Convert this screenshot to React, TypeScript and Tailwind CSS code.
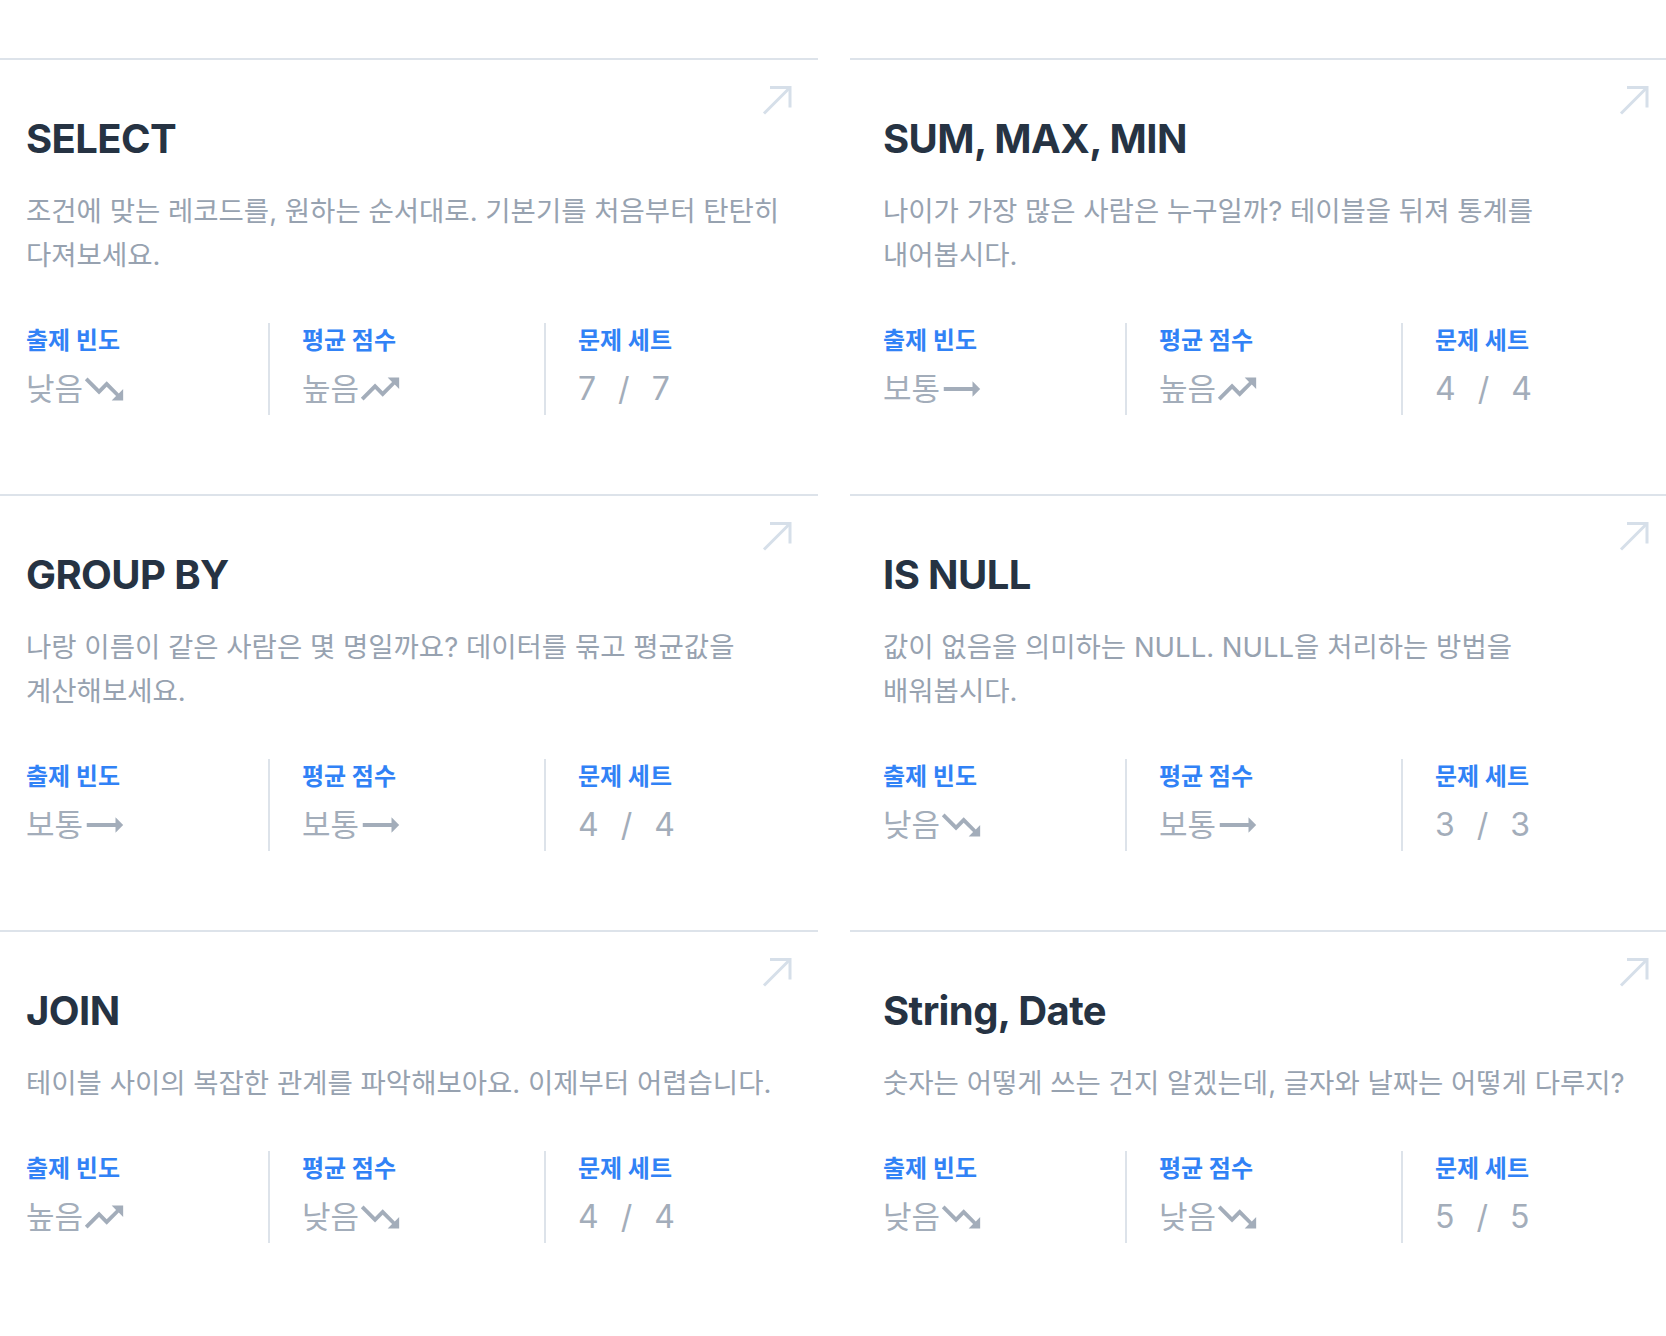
import React from "react";

type Trend = "up" | "down" | "flat";

interface Topic {
	title: string;
	description: string;
	frequency: { label: string; trend: Trend };
	score: { label: string; trend: Trend };
	solved: number;
	total: number;
}

const TOPICS: Topic[] = [
	{
		title: "SELECT",
		description: "조건에 맞는 레코드를, 원하는 순서대로. 기본기를 처음부터 탄탄히 다져보세요.",
		frequency: { label: "낮음", trend: "down" },
		score: { label: "높음", trend: "up" },
		solved: 7,
		total: 7,
	},
	{
		title: "SUM, MAX, MIN",
		description: "나이가 가장 많은 사람은 누구일까? 테이블을 뒤져 통계를 내어봅시다.",
		frequency: { label: "보통", trend: "flat" },
		score: { label: "높음", trend: "up" },
		solved: 4,
		total: 4,
	},
	{
		title: "GROUP BY",
		description: "나랑 이름이 같은 사람은 몇 명일까요? 데이터를 묶고 평균값을 계산해보세요.",
		frequency: { label: "보통", trend: "flat" },
		score: { label: "보통", trend: "flat" },
		solved: 4,
		total: 4,
	},
	{
		title: "IS NULL",
		description: "값이 없음을 의미하는 NULL. NULL을 처리하는 방법을 배워봅시다.",
		frequency: { label: "낮음", trend: "down" },
		score: { label: "보통", trend: "flat" },
		solved: 3,
		total: 3,
	},
	{
		title: "JOIN",
		description: "테이블 사이의 복잡한 관계를 파악해보아요. 이제부터 어렵습니다.",
		frequency: { label: "높음", trend: "up" },
		score: { label: "낮음", trend: "down" },
		solved: 4,
		total: 4,
	},
	{
		title: "String, Date",
		description: "숫자는 어떻게 쓰는 건지 알겠는데, 글자와 날짜는 어떻게 다루지?",
		frequency: { label: "낮음", trend: "down" },
		score: { label: "낮음", trend: "down" },
		solved: 5,
		total: 5,
	},
];

// material "trending_*" glyphs
const TREND_PATHS: Record<Trend, string> = {
	up: "M16 6l2.29 2.29-4.88 4.88-4-4L2 16.59 3.41 18l6-6 4 4 6.3-6.29L22 12V6z",
	down: "M16 18l2.29-2.29-4.88-4.88-4 4L2 7.41 3.41 6l6 6 4-4 6.3 6.29L22 12v6z",
	flat: "M22 12l-4-4v3H3v2h15v3z",
};

function TrendIcon({ trend }: { trend: Trend }): React.ReactElement {
	return (
		<svg viewBox="0 0 24 24" className="ml-[-2px] h-[46px] w-[46px] shrink-0" fill="currentColor">
			<path d={TREND_PATHS[trend]} />
		</svg>
	);
}

function CornerArrow(): React.ReactElement {
	return (
		<svg viewBox="0 0 30 30" className="h-[30px] w-[30px]" fill="none" stroke="#d6dfe9" strokeWidth={3}>
			<path d="M2 28.5 L28 2.5" />
			<path d="M8 2.5 H28 V22.5" />
		</svg>
	);
}

function StatLabel({ children }: { children: React.ReactNode }): React.ReactElement {
	return <div className="text-[24px] font-bold leading-[28px] text-[#3182f6]">{children}</div>;
}

function TrendStat({ label, value }: { label: string; value: { label: string; trend: Trend } }): React.ReactElement {
	return (
		<>
			<StatLabel>{label}</StatLabel>
			<div className="mt-[10px] flex h-[47px] items-center text-[#a3adba]">
				<span className="text-[31px] leading-[34px]">{value.label}</span>
				<TrendIcon trend={value.trend} />
			</div>
		</>
	);
}

function TopicCard({ topic }: { topic: Topic }): React.ReactElement {
	return (
		<div className="border-t-2 border-[#dde3ea] pl-[33px] pr-[26px] pt-[25px] pb-[79px]">
			<div className="flex h-[30px] justify-end">
				<CornerArrow />
			</div>
			<h2 className="text-[40px] font-bold leading-[48px] tracking-[-0.6px] text-[#263343]">{topic.title}</h2>
			<p className="mt-[26px] break-keep text-[27.5px] leading-[44px] text-[#97a2b0]">{topic.description}</p>
			<div className="mt-[46px] flex">
				<div className="h-[92px] w-[242px] pt-[4px]">
					<TrendStat label="출제 빈도" value={topic.frequency} />
				</div>
				<div className="h-[92px] w-[276px] border-l-2 border-[#dde3ea] pl-[32px] pt-[4px]">
					<TrendStat label="평균 점수" value={topic.score} />
				</div>
				<div className="h-[92px] flex-1 border-l-2 border-[#dde3ea] pl-[32px] pt-[4px]">
					<StatLabel>문제 세트</StatLabel>
					<div className="mt-[10px] flex h-[47px] items-center gap-[22px] text-[32px] leading-[34px] text-[#a3adba]">
						<span>{topic.solved}</span>
						<span>/</span>
						<span>{topic.total}</span>
					</div>
				</div>
			</div>
		</div>
	);
}

export default function App(): React.ReactElement {
	return (
		<div
			className="min-h-screen w-full overflow-hidden bg-white pt-[58px]"
			style={{ fontFamily: 'Inter, "Noto Sans CJK KR", "Noto Sans", sans-serif' }}
		>
			<div className="ml-[-7px] grid w-[1682px] grid-cols-2 gap-x-[32px]">
				{TOPICS.map((topic) => (
					<TopicCard key={topic.title} topic={topic} />
				))}
			</div>
		</div>
	);
}
